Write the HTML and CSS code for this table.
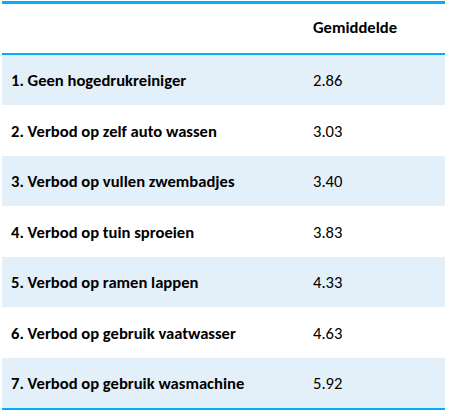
FILE: index.html
```html
<!DOCTYPE html>
<html lang="nl">
<head>
    <meta charset="UTF-8">
    <meta name="viewport" content="width=device-width, initial-scale=1.0">
    <title>Gemiddelde</title>
    <link rel="stylesheet" href="styles.css">
</head>
<body>
    <!-- Ranking table -->
    <table class="score-table">
        <thead>
            <tr>
                <th class="label-col"></th>
                <th class="value-col">Gemiddelde</th>
            </tr>
        </thead>
        <tbody>
            <tr class="shaded"><td class="label-col">1. Geen hogedrukreiniger</td><td class="value-col">2.86</td></tr>
            <tr><td class="label-col">2. Verbod op zelf auto wassen</td><td class="value-col">3.03</td></tr>
            <tr class="shaded"><td class="label-col">3. Verbod op vullen zwembadjes</td><td class="value-col">3.40</td></tr>
            <tr><td class="label-col">4. Verbod op tuin sproeien</td><td class="value-col">3.83</td></tr>
            <tr class="shaded"><td class="label-col">5. Verbod op ramen lappen</td><td class="value-col">4.33</td></tr>
            <tr><td class="label-col">6. Verbod op gebruik vaatwasser</td><td class="value-col">4.63</td></tr>
            <tr class="shaded"><td class="label-col">7. Verbod op gebruik wasmachine</td><td class="value-col">5.92</td></tr>
        </tbody>
    </table>
</body>
</html>
```

FILE: styles.css
```css
* {
    margin: 0;
    padding: 0;
    box-sizing: border-box;
}

body {
    font-family: Carlito, Calibri, Lato, sans-serif;
    background-color: #fff;
    color: #000;
    padding: 1px 4px 0 2px;
}

/* Table */
.score-table {
    width: 443px;
    border-collapse: separate;
    border-spacing: 0;
    border-top: 3px solid #00b0f0;
    border-bottom: 2px solid #00b0f0;
    font-size: 16.6px;
}

.score-table th {
    height: 51px;
    border-bottom: 2px solid #00b0f0;
    font-weight: bold;
    text-align: left;
    padding-bottom: 4px;
}

.score-table td {
    height: 50px;
}

.score-table tbody tr:nth-child(even) td {
    height: 51px;
}

.score-table tr.shaded {
    background-color: #e4f0f9;
}

.label-col {
    width: 303px;
    padding-left: 9px;
    font-weight: bold;
}

.value-col {
    padding-left: 8px;
    font-weight: normal;
}

th.value-col {
    font-weight: bold;
}
```
